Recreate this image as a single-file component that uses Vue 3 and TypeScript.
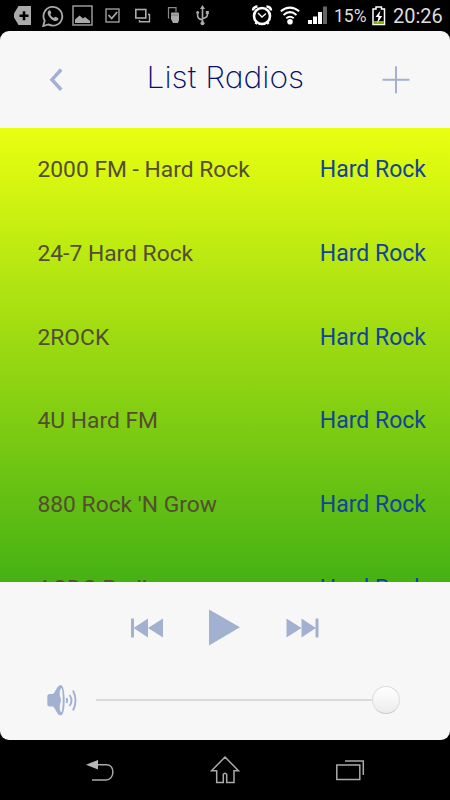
<script setup lang="ts">
import { ref } from 'vue'

interface Station {
  name: string
  genre: string
}

const stations: Station[] = [
  { name: '2000 FM - Hard Rock', genre: 'Hard Rock' },
  { name: '24-7 Hard Rock', genre: 'Hard Rock' },
  { name: '2ROCK', genre: 'Hard Rock' },
  { name: '4U Hard FM', genre: 'Hard Rock' },
  { name: "880 Rock 'N Grow", genre: 'Hard Rock' },
  { name: 'ACDC Radio', genre: 'Hard Rock' },
]

const volume = ref(100)
</script>

<template>
  <div class="phone">
    <header class="status">
      <div class="notifications">
        <svg width="18" height="22" viewBox="14 5 18 22">
          <path d="M18.5 6H31v19H18.5L14 17.5v-4z" fill="#aaa" />
          <path d="M19.5 15.7h9M24 11.2v9" stroke="#000" stroke-width="2.6" />
        </svg>
        <svg width="22" height="22" viewBox="42 4 22 22" fill="none" stroke="#aaa">
          <path d="M43.2 25l1.5-5.2a9.4 9.4 0 1 1 3.6 3.6z" stroke-width="1.8" />
          <path d="M48.8 9.6c-2 1.8-1 5 1.6 7.600s5.600 4 7.600 1.800c.7-1 .5-1.800-.4-2.300l-1.800-.9c-.8-.3-1.200.9-1.900 1-1.300-.2-3.300-2.200-3.500-3.400.2-.6 1-.9.900-1.600l-.9-2c-.4-.8-1-.8-1.600-.2z" fill="#aaa" stroke="none" />
        </svg>
        <svg width="21" height="22" viewBox="72 5 21 22">
          <rect x="73" y="6" width="19" height="19" fill="none" stroke="#999" stroke-width="1.500" />
          <path d="M75 23v-3.500l4.500-4 3.500 3 2-1.500 5 4V23z" fill="#aaa" />
        </svg>
        <svg width="16" height="16" viewBox="105 8 16 16" fill="none" stroke="#aaa">
          <rect x="106" y="9" width="13" height="13" stroke-width="1.300" />
          <path d="M108.500 15l3.200 3.500 5.500-6.500" stroke-width="1.800" />
        </svg>
        <svg width="16" height="16" viewBox="135 8 16 16" fill="none" stroke="#aaa">
          <rect x="135.800" y="9.500" width="10" height="8.500" stroke-width="1.600" />
          <path d="M148 14.500h1.500v7.300h-10V20" stroke-width="1.400" />
        </svg>
        <svg width="13" height="18" viewBox="167 7 13 18">
          <path d="M169.500 18h-1V7.700h7.500V12" fill="none" stroke="#888" stroke-width="1.200" />
          <path d="M171 13.500q0-1 1-1h6q1 0 1 1V20l-1 3h-5l-2-4z" fill="#aaa" />
          <path d="M171 15h7.500" stroke="#666" stroke-width=".7" />
        </svg>
        <svg width="13" height="22" viewBox="196 5 13 22" fill="none" stroke="#aaa" stroke-width="1.600">
          <path d="M202.500 8v15M202.500 20c-4-1-5-2-5-6M202.500 18.500c4-1 5-1.500 5-5" />
          <path d="M200 9l2.500-4 2.500 4z" fill="#aaa" stroke="none" />
          <circle cx="202.500" cy="23.200" r="2" fill="#aaa" stroke="none" />
          <circle cx="197.700" cy="12.500" r="1.500" fill="#aaa" stroke="none" />
          <path d="M205.800 11h3v3h-3z" fill="#aaa" stroke="none" />
        </svg>
      </div>
      <div class="system">
        <svg class="alarm" width="22" height="22" viewBox="251 5 22 22" fill="none" stroke="#fff">
          <circle cx="262" cy="16" r="8" stroke-width="2.600" />
          <path d="M253 10.500q0-3.500 4.500-4M271 10.500q0-3.500-4.500-4M255.500 24l1.500-2M268.500 24l-1.500-2" stroke-width="2.500" />
          <path d="M258 13l4 4 4-3.500" stroke-width="1.300" />
        </svg>
        <svg class="wifi" width="20" height="20" viewBox="280 6 20 20" fill="none" stroke="#fff" stroke-width="2">
          <path d="M280.800 11.300q9-7.400 18.400 0M283.500 14.900q6.500-5.500 13 0M286.300 18.200q3.700-3 7.400 0" />
          <circle cx="290" cy="21.700" r="2.800" fill="#fff" stroke="none" />
        </svg>
        <svg class="signal" width="20" height="19" viewBox="308 7 20 19">
          <path d="M308 21h4v4h-4zM313 17.500h4V25h-4zM318 13h4v12h-4z" fill="#fff" />
          <path d="M323 7.500h4V25h-4z" fill="#666" />
        </svg>
        <span class="percent">15%</span>
        <svg class="battery" width="14" height="20" viewBox="372 6 14 20">
          <path d="M373 24.500V9h3V7h5.500v2h3v15.500z" fill="none" stroke="#fff" stroke-width="1.500" />
          <path d="M374 21h10v3h-10z" fill="#7db500" />
          <path d="M380.500 10.500l-5 6.500h3l-1.500 6.500 5.200-7.500h-3z" fill="#fff" />
        </svg>
        <span class="clock">20:26</span>
      </div>
    </header>

    <main class="app">
      <div class="titlebar">
        <svg class="back" width="14" height="26" viewBox="49 67 14 26">
          <path d="M61.200 69.500L52 79.700l9.200 10" fill="none" stroke="#a3b1d1" stroke-width="3.500" />
        </svg>
        <h1>List Radios</h1>
        <svg class="add" width="28" height="28" viewBox="382 66 28 28">
          <path d="M382.500 79.700h27M396 66.300v26.900" stroke="#a3b1d1" stroke-width="2" />
        </svg>
      </div>

      <ul class="stations">
        <li v-for="station in stations" :key="station.name">
          <span class="name">{{ station.name }}</span>
          <span class="genre">{{ station.genre }}</span>
        </li>
      </ul>

      <section class="player">
        <div class="transport">
          <svg width="33" height="20" viewBox="0 0 33 20" fill="#a3b1d1">
            <path d="M0 .5h3v19H0zM2.500 10L17 .5V10L32 .5v19L17 10v9.500z" />
          </svg>
          <svg width="32" height="37" viewBox="0 0 32 37" fill="#a3b1d1">
            <path d="M0 .500L31 18.300 0 36.500z" />
          </svg>
          <svg width="33" height="20" viewBox="0 0 33 20" fill="#a3b1d1">
            <path d="M29.500.500h3v19h-3zM30 10L15.500.500V10L.5.500v19L15.500 10v9.500z" />
          </svg>
        </div>
        <div class="volume">
          <svg width="30" height="32" viewBox="47 684 30 32">
            <path d="M47.300 696.500q0-2.500 2.500-2.500h3c2.500-1 4-8.800 8-9 5 0 5.500 30.300 0 30.500-4-.2-5.500-8-8-9h-3q-2.500 0-2.500-2.500z" fill="#a3b1d1" />
            <path d="M61.400 688c-1.900 1.500-2 6.500-1.200 9 .9 1 .9 5.600 0 6.800-.8 2.500-.7 7.200 1.200 8.700 1.700-2 1.900-22.500 0-24.500z" fill="#f7f7f7" />
            <path d="M66.300 698q1.700 2.500 0 5M69.500 695q4 5.500 0 11M73 690.500q5 9.800 0 20" fill="none" stroke="#a3b1d1" stroke-width="1.900" />
          </svg>
          <div class="slider">
            <div class="track" :style="{ width: volume + '%' }"></div>
            <div class="knob"></div>
          </div>
        </div>
      </section>
    </main>

    <nav class="navbar">
      <svg width="30" height="24" viewBox="85 760 30 24">
        <path d="M96 766.700h11c8 0 8 15.300-1 15.300H92" fill="none" stroke="#aaa" stroke-width="1.500" />
        <path d="M86 766.700l12-4.700v9.500z" fill="#b8b8b8" />
      </svg>
      <svg width="30" height="30" viewBox="210 755 30 30" fill="none" stroke="#aaa" stroke-width="1.500">
        <path d="M225 757l13.500 13.800H234v11.700h-7.300v-8q-1.700-2.500-3.400 0v8H216.700v-11.700H211.500z" />
      </svg>
      <svg width="30" height="24" viewBox="335 761 30 24" fill="none" stroke="#aaa" stroke-width="1.500">
        <rect x="336.800" y="768" width="23" height="14.500" />
        <path d="M345 764h18.300v14" />
      </svg>
    </nav>
  </div>
</template>

<style>
body {
  background: #000;
}
</style>

<style scoped>
.phone {
  width: 450px;
  height: 800px;
  display: flex;
  flex-direction: column;
  overflow: hidden;
  background: #000;
  font-family: Roboto, 'Liberation Sans', sans-serif;
}

svg {
  display: block;
  flex: none;
}

.status {
  height: 31px;
  display: flex;
  justify-content: space-between;
  color: #ddd;
  flex: none;
}

.notifications {
  display: flex;
  align-items: center;
  padding-left: 14px;
}

.notifications svg:nth-child(2) { margin-left: 10px; }
.notifications svg:nth-child(3) { margin-left: 8px; }
.notifications svg:nth-child(4) { margin-left: 12px; }
.notifications svg:nth-child(5) { margin-left: 14px; }
.notifications svg:nth-child(6) { margin-left: 16px; }
.notifications svg:nth-child(7) { margin-left: 16px; }

.system {
  width: 199px;
  display: flex;
  align-items: center;
  white-space: nowrap;
}

.wifi { margin-left: 7px; }
.signal { margin-left: 8px; }

.percent {
  width: 37px;
  margin-left: 6px;
  font-size: 17.5px;
  line-height: 31px;
  padding-top: 2px;
}

.battery { margin-left: 1px; }

.clock {
  margin-left: 7px;
  font-size: 20px;
  line-height: 31px;
  padding-top: 1px;
}

.app {
  height: 709px;
  flex: none;
  display: flex;
  flex-direction: column;
  border-radius: 9px;
  overflow: hidden;
  background: #f7f7f7;
}

.titlebar {
  height: 97px;
  flex: none;
  display: flex;
  align-items: center;
  justify-content: space-between;
  padding: 0 40px 0 49px;
}

h1 {
  margin: 0 0 5px 5px;
  font-family: Inter, Lato, sans-serif;
  font-size: 30px;
  font-weight: 200;
  font-feature-settings: 'cv11' 1;
  line-height: 40px;
  color: #05106f;
  transform: scaleX(1.06);
}

.stations {
  height: 454px;
  flex: none;
  margin: 0;
  padding: 0;
  list-style: none;
  overflow: hidden;
  background: linear-gradient(#e9ff10, #46b114);
}

.stations li {
  height: 83.7px;
  display: flex;
  align-items: center;
  justify-content: space-between;
  padding: 0 24px 0 37.5px;
  font-size: 23px;
}

.name {
  color: #544d30;
  font-size: 22.8px;
}

.genre { color: #12449a; }

.player {
  flex: 1;
}

.transport {
  display: flex;
  align-items: center;
  justify-content: center;
  gap: 45px;
  height: 91px;
  padding-right: 1px;
}

.volume {
  display: flex;
  align-items: center;
  padding: 11px 50px 0 47px;
}

.slider {
  flex: 1;
  margin-left: 19px;
  height: 28px;
  display: flex;
  align-items: center;
}

.track {
  height: 2px;
  background: #dadcda;
}

.knob {
  width: 28px;
  height: 28px;
  flex: none;
  box-sizing: border-box;
  border: 1px solid #ddd;
  border-bottom-color: #ccc;
  border-radius: 50%;
  background: linear-gradient(#fff, #ececec);
}

.navbar {
  flex: 1;
  display: flex;
  align-items: center;
  justify-content: space-between;
  padding: 0 85px;
}
</style>
